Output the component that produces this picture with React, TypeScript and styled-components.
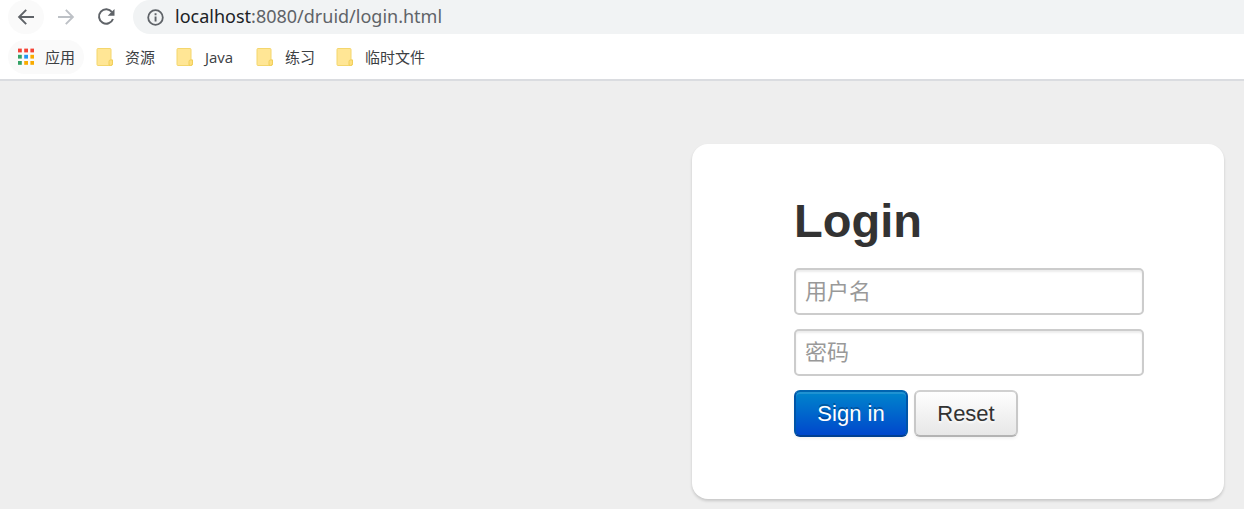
import React from "react";
import styled, { createGlobalStyle } from "styled-components";

const GlobalStyle = createGlobalStyle`
  * { box-sizing: border-box; }
  body {
    margin: 0;
    background: #eee;
    font-family: "Liberation Sans", "Noto Sans CJK SC", sans-serif;
    color: #333;
  }
`;

const Page = styled.div`
  display: flex;
  flex-direction: column;
  min-height: 100vh;
`;

const Chrome = styled.header`
  background: #fff;
  border-bottom: 2px solid #dadce0;
  font-family: "Open Sans", "Noto Sans CJK SC", sans-serif;
`;

const Toolbar = styled.div`
  display: flex;
  align-items: center;
  height: 34px;
  padding-left: 8px;
`;

const NavButton = styled.button<{ $lit?: boolean }>`
  display: flex;
  align-items: center;
  justify-content: center;
  width: 36px;
  height: 34px;
  margin-right: 4px;
  padding: 0;
  border: 0;
  border-radius: 17px;
  background: ${(p) => (p.$lit ? "#fafafa" : "transparent")};
`;

const AddressBar = styled.div`
  display: flex;
  flex: 1;
  align-items: center;
  gap: 11px;
  height: 34px;
  margin-left: 5px;
  padding-left: 14px;
  border-radius: 17px 0 0 17px;
  background: #f1f3f4;
`;

const Address = styled.span`
  font-family: "Noto Sans", sans-serif;
  font-size: 18px;
  line-height: 32px;
  padding-bottom: 2px;
  color: #5f6368;
`;

const Host = styled.span`
  color: #202124;
`;

const Bookmarks = styled.nav`
  display: flex;
  align-items: center;
  height: 45px;
  padding-left: 8px;
`;

const Bookmark = styled.a<{ $lit?: boolean }>`
  display: flex;
  align-items: center;
  gap: 11px;
  min-width: 76px;
  height: 34px;
  margin-right: 4px;
  padding: 0 8px;
  border-radius: 17px;
  background: ${(p) => (p.$lit ? "#fafafa" : "transparent")};
  color: #3c4043;
  font-size: 15px;
  line-height: 34px;
  text-decoration: none;
`;

const Content = styled.main`
  display: flex;
  flex: 1;
  align-items: flex-start;
  justify-content: flex-end;
  padding: 63px 20px 10px;
`;

const LoginForm = styled.form`
  display: flex;
  flex-direction: column;
  gap: 14px;
  width: 532px;
  max-width: 100%;
  padding: 46px 80px 62px 102px;
  border-radius: 16px;
  background: #fff;
  box-shadow: 0 2px 3px rgba(0, 0, 0, 0.16);
`;

const Title = styled.h2`
  margin: 0;
  padding-bottom: 2px;
  font-size: 47px;
  line-height: 62px;
`;

const Field = styled.input`
  width: 100%;
  height: 47px;
  padding: 0 9px;
  border: 2px solid #ccc;
  border-radius: 5px;
  background: #fff;
  box-shadow: inset 0 2px 2px rgba(0, 0, 0, 0.075);
  color: #555;
  font: 22px "Liberation Sans", "Noto Sans CJK SC", sans-serif;
  &::placeholder { color: #999; opacity: 1; }
`;

const Actions = styled.div`
  display: flex;
  gap: 6px;
`;

const Button = styled.button<{ $primary?: boolean }>`
  min-width: ${(p) => (p.$primary ? "114px" : "104px")};
  height: 47px;
  padding: 0 21px;
  border: 2px solid;
  border-radius: 6px;
  font: 22px "Liberation Sans", sans-serif;
  border-color: ${(p) => (p.$primary ? "#0064b0 #0055a8 #003f92" : "#d0d0d0 #c8c8c8 #b3b3b3")};
  color: ${(p) => (p.$primary ? "#fff" : "#333")};
  background: ${(p) =>
    p.$primary ? "linear-gradient(#08c, #04c)" : "linear-gradient(#fff, #e6e6e6)"};
  background-origin: border-box;
  text-shadow: ${(p) =>
    p.$primary ? "0 -2px 0 rgba(0, 0, 0, 0.25)" : "0 2px 2px rgba(255, 255, 255, 0.75)"};
  box-shadow: inset 0 2px 0 rgba(255, 255, 255, 0.12), 0 2px 3px rgba(0, 0, 0, 0.05);
`;

const BackIcon = () => (
  <svg width="18" height="18" viewBox="0 0 18 18" fill="none" stroke="#5f6368" strokeWidth="1.9">
    <path d="M17 9H2.5M9.2 1.9L2.1 9L9.2 16.1" />
  </svg>
);

const ForwardIcon = () => (
  <svg width="18" height="18" viewBox="0 0 18 18" fill="none" stroke="#bdc1c6" strokeWidth="1.9">
    <path d="M1 9H15.5M8.8 1.9L15.9 9L8.8 16.1" />
  </svg>
);

const ReloadIcon = () => (
  <svg width="18" height="18" viewBox="0 0 18 18">
    <path d="M15 4.2A7.2 7.2 0 1 0 16 11" fill="none" stroke="#5f6368" strokeWidth="2" />
    <path d="M17.5 1V7.8H10.7z" fill="#5f6368" />
  </svg>
);

const InfoIcon = () => (
  <svg width="17" height="17" viewBox="0 0 17 17">
    <circle cx="8.5" cy="8.5" r="7.3" fill="none" stroke="#5f6368" strokeWidth="1.8" />
    <path d="M7.6 7.6h1.9v5H7.6zM7.6 4.3h1.9v1.9H7.6z" fill="#5f6368" />
  </svg>
);

const appColors = [
  "#f44336", "#f44336", "#f44336",
  "#34a267", "#2196f3", "#f9ab00",
  "#34a267", "#f9ab00", "#f9ab00",
];

const AppsIcon = () => (
  <svg width="18" height="18" viewBox="0 0 18 18">
    {appColors.map((color, i) => (
      <rect key={i} x={2 + (i % 3) * 6.2} y={0.6 + Math.floor(i / 3) * 6.2} width="3.8" height="3.8" fill={color} />
    ))}
  </svg>
);

const FolderIcon = () => (
  <svg width="18" height="20" viewBox="0 0 18 20">
    <path d="M2 1.5h12q1 0 1 1V13l1.5 0v4q0 1.5-1.5 1.5H2q-1 0-1-1V2.5q0-1 1-1z" fill="#ffe695" stroke="#f4d66d" />
    <path d="M13 18v-3.5q0-1.5 1.5-1.5h2v3.5q0 2-2 2z" fill="#ffe07e" stroke="#f0cf5c" />
  </svg>
);

const folders = ["资源", "Java", "练习", "临时文件"];

export default function App() {
  return (
    <Page>
      <GlobalStyle />
      <Chrome>
        <Toolbar>
          <NavButton $lit aria-label="Back"><BackIcon /></NavButton>
          <NavButton aria-label="Forward"><ForwardIcon /></NavButton>
          <NavButton aria-label="Reload"><ReloadIcon /></NavButton>
          <AddressBar>
            <InfoIcon />
            <Address><Host>localhost</Host>:8080/druid/login.html</Address>
          </AddressBar>
        </Toolbar>
        <Bookmarks>
          <Bookmark $lit href="#"><AppsIcon />应用</Bookmark>
          {folders.map((name) => (
            <Bookmark key={name} href="#"><FolderIcon />{name}</Bookmark>
          ))}
        </Bookmarks>
      </Chrome>
      <Content>
        <LoginForm onSubmit={(e) => e.preventDefault()}>
          <Title>Login</Title>
          <Field type="text" name="username" placeholder="用户名" aria-label="用户名" />
          <Field type="password" name="password" placeholder="密码" aria-label="密码" />
          <Actions>
            <Button $primary type="submit">Sign in</Button>
            <Button type="reset">Reset</Button>
          </Actions>
        </LoginForm>
      </Content>
    </Page>
  );
}
